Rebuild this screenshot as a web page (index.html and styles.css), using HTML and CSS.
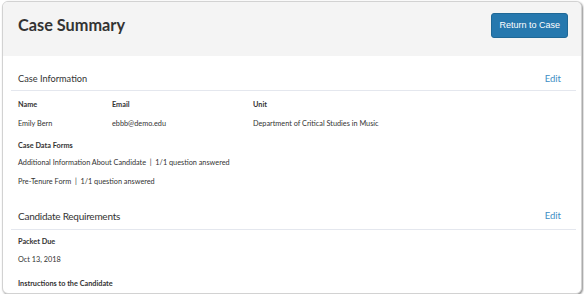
FILE: index.html
```html
<!DOCTYPE html>
<html lang="en">
<head>
    <meta charset="UTF-8">
    <meta name="viewport" content="width=device-width, initial-scale=1.0">
    <title>Case Summary</title>
    <link rel="stylesheet" href="styles.css">
</head>
<body>
    <div class="card">
        <!-- Page header -->
        <div class="page-header">
            <h1>Case Summary</h1>
            <a class="btn" href="#">Return to Case</a>
        </div>

        <div class="content">
            <!-- Case information -->
            <div class="section-head">
                <h2>Case Information</h2>
                <a class="edit" href="#">Edit</a>
            </div>
            <div class="fields">
                <div class="field name">
                    <div class="label">Name</div>
                    <div class="value">Emily Bern</div>
                </div>
                <div class="field email">
                    <div class="label">Email</div>
                    <div class="value">ebbb@demo.edu</div>
                </div>
                <div class="field unit">
                    <div class="label">Unit</div>
                    <div class="value">Department of Critical Studies in Music</div>
                </div>
            </div>
            <div class="label forms-label">Case Data Forms</div>
            <div class="value form-row first">Additional Information About Candidate &nbsp;|&nbsp; 1/1 question answered</div>
            <div class="value form-row">Pre-Tenure Form &nbsp;|&nbsp; 1/1 question answered</div>

            <!-- Candidate requirements -->
            <div class="section-head second">
                <h2 class="big">Candidate Requirements</h2>
                <a class="edit" href="#">Edit</a>
            </div>
            <div class="label packet-label">Packet Due</div>
            <div class="value packet-value">Oct 13, 2018</div>
            <div class="label instr-label">Instructions to the Candidate</div>
        </div>
    </div>
</body>
</html>
```

FILE: styles.css
```css
/* General styles */
body {
    font-family: Lato, "Open Sans", sans-serif;
    margin: 0;
    padding: 1px 2px 0 2px;
    background: #fff;
    color: #333;
}
.card {
    height: 291px;
    border: 1px solid #d2d2d2;
    border-radius: 6px;
    box-shadow: 1px 1px 2px rgba(0, 0, 0, 0.45);
    overflow: hidden;
    background: #fff;
}

/* Header */
.page-header {
    height: 54px;
    box-sizing: border-box;
    background: #f4f4f4;
    display: flex;
    justify-content: space-between;
    align-items: flex-start;
    padding: 11px 13px 0 15px;
}
h1 {
    margin: 0;
    font-size: 16.3px;
    font-weight: 700;
    line-height: 24px;
    color: #333;
}
.btn {
    display: block;
    background: #2678ae;
    border: 1px solid #1f6896;
    border-radius: 3px;
    color: #fff;
    font-size: 9px;
    line-height: 23px;
    padding: 0 7px;
    text-decoration: none;
    font-family: "Liberation Sans", Arial, sans-serif;
}

/* Content */
.content {
    padding: 0 5px 0 8px;
}
.section-head {
    display: flex;
    justify-content: space-between;
    align-items: center;
    padding: 16px 15px 4px 7px;
    border-bottom: 1px solid #e4e7ee;
}
.section-head.second {
    padding-top: 20px;
    padding-bottom: 5px;
}
h2 {
    margin: 0;
    font-size: 9.2px;
    font-weight: 400;
    line-height: 14px;
    color: #333;
}
h2.big {
    font-size: 10px;
    letter-spacing: -0.25px;
    line-height: 16px;
}
.edit {
    font-size: 9.5px;
    color: #3d8ec4;
    text-decoration: none;
    line-height: 14px;
}
.label {
    font-size: 7.3px;
    font-weight: 700;
    line-height: 12px;
    padding-left: 7px;
}
.value {
    font-size: 7.3px;
    line-height: 12px;
    padding-left: 7px;
}
.fields {
    display: flex;
    margin-top: 8px;
}
.field .label,
.field .value {
    padding-left: 0;
}
.field .value {
    margin-top: 7px;
}
.field.name {
    width: 94px;
    padding-left: 7px;
}
.field.email {
    width: 141px;
}
.forms-label {
    margin-top: 10px;
}
.form-row {
    margin-top: 7px;
}
.form-row.first {
    margin-top: 5px;
}
.packet-label {
    margin-top: 6px;
}
.packet-value {
    margin-top: 6px;
}
.instr-label {
    margin-top: 12px;
}
```
